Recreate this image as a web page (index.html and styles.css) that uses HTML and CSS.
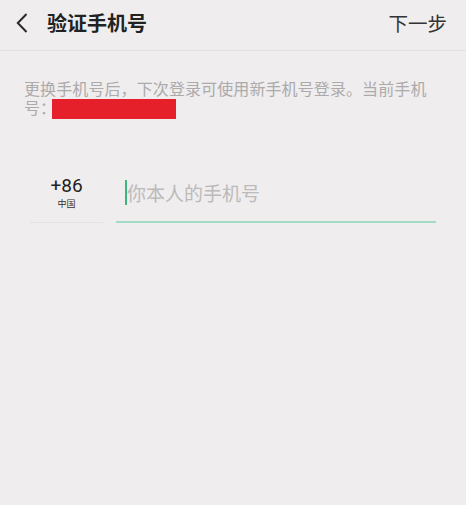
FILE: index.html
```html
<!DOCTYPE html>
<html lang="zh">
<head>
<meta charset="utf-8">
<link rel="stylesheet" href="styles.css">
</head>
<body>
<div class="page">
  <header class="topbar">
    <div class="left">
      <svg class="back" width="12" height="20" viewBox="0 0 12 20"><path d="M10.5 1 L1.8 10 L10.5 19" fill="none" stroke="#2a2a2a" stroke-width="2"/></svg>
      <span class="title">验证手机号</span>
    </div>
    <span class="next">下一步</span>
  </header>
  <p class="desc">更换手机号后，下次登录可使用新手机号登录。当前手机号：<span class="mask"></span></p>
  <div class="form">
    <div class="country">
      <span class="code">+86</span>
      <span class="cname">中国</span>
    </div>
    <div class="input">
      <span class="cursor"></span>
      <span class="placeholder">你本人的手机号</span>
    </div>
  </div>
</div>
</body>
</html>
```
FILE: styles.css
```css
html, body {
  margin: 0;
  padding: 0;
  background: #efedee;
}
body {
  font-family: "Noto Sans CJK SC", "Noto Sans", sans-serif;
  width: 466px;
  height: 505px;
  overflow: hidden;
}
.topbar {
  height: 50px;
  border-bottom: 1px solid #e2e0e1;
  display: flex;
  align-items: center;
  justify-content: space-between;
  padding: 0 19px 0 16px;
  box-sizing: content-box;
}
.left {
  display: flex;
  align-items: center;
}
.back {
  display: block;
  margin-top: -4px;
}
.title {
  margin-left: 19px;
  font-size: 20px;
  font-weight: bold;
  color: #222;
  margin-top: -5px;
}
.next {
  font-size: 19.5px;
  color: #333;
  margin-top: -5px;
}
.desc {
  margin: 28px 28px 0 24px;
  font-size: 16px;
  line-height: 19px;
  color: #acaaab;
  letter-spacing: 0.1px;
}
.mask {
  display: inline-block;
  width: 124px;
  height: 20px;
  background: #e6202b;
  vertical-align: -5px;
  margin-left: -4px;
}
.form {
  display: flex;
  align-items: flex-end;
  margin: 53px 30px 0 30px;
}
.country {
  width: 73px;
  height: 50px;
  border-bottom: 1px solid #e4e2e3;
  display: flex;
  flex-direction: column;
  align-items: center;
  box-sizing: border-box;
  padding-top: 3px;
}
.code {
  font-family: "Roboto", "Noto Sans", sans-serif;
  font-size: 19px;
  line-height: 20px;
  color: #222;
}
.cname {
  font-size: 9px;
  line-height: 12px;
  color: #333;
  margin-top: 2px;
}
.input {
  flex: 1;
  margin-left: 13px;
  height: 51px;
  border-bottom: 2px solid #a3dcc4;
  display: flex;
  align-items: center;
  box-sizing: border-box;
  padding-left: 9px;
  padding-bottom: 8px;
}
.cursor {
  width: 2px;
  height: 25px;
  background: #3fb57e;
}
.placeholder {
  font-size: 19px;
  color: #bcbabb;
  margin-left: 0;
}
```
